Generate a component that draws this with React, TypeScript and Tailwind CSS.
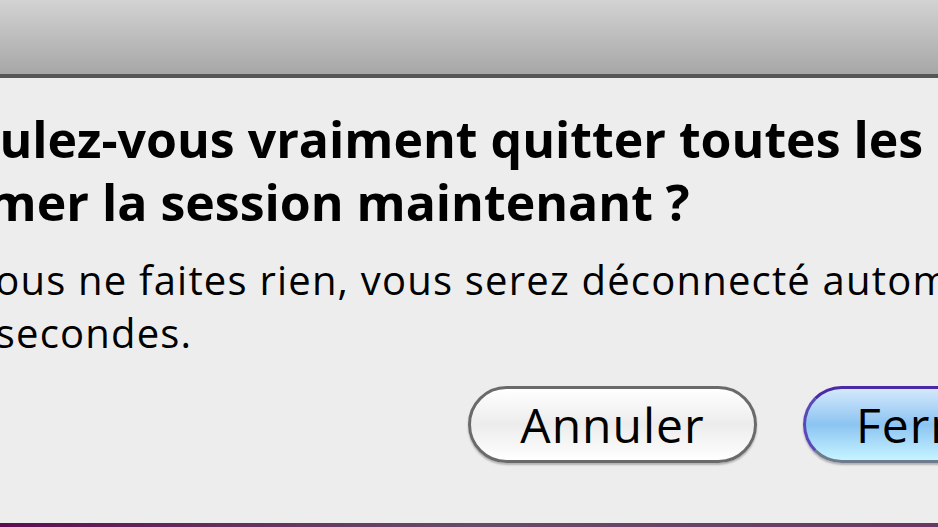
import React from "react";

export default function App() {
  return (
    <div
      className="w-[938px] h-[527px] overflow-hidden flex flex-col bg-[#ededed] text-black"
      style={{ fontFamily: '"Open Sans", "DejaVu Sans", sans-serif' }}
    >
      <div className="h-[78px] shrink-0 bg-gradient-to-b from-[#d3d3d3] to-[#a7a7a7] border-b-4 border-[#565656]" />
      <div className="flex-1 flex flex-col overflow-hidden">
        <div className="mt-[30px] flex flex-col whitespace-nowrap font-bold text-[50px] leading-[63px]">
          <div className="-ml-[64px]">Voulez-vous vraiment quitter toutes les applications et</div>
          <div className="-ml-[84px]">fermer la session maintenant ?</div>
        </div>
        <div className="mt-[19px] flex flex-col whitespace-nowrap text-[40px] leading-[53px] tracking-[1.2px]">
          <div className="-ml-[72px]">Si vous ne faites rien, vous serez déconnecté automatiquement dans</div>
          <div className="-ml-[64px]">60 secondes.</div>
        </div>
        <div className="mt-[27px] ml-[468px] flex gap-[46px] whitespace-nowrap">
          <button className="h-[77px] w-[289px] shrink-0 rounded-full border-[3px] border-[#6a6a6a] bg-gradient-to-b from-white via-[#ececec] to-white text-[48px] leading-none tracking-[1px] shadow-[0_2px_2px_rgba(0,0,0,0.25)]">
            Annuler
          </button>
          <button className="h-[77px] shrink-0 px-[50px] rounded-full border-[3px] border-[#6f7a8c] border-t-[#4a2aa6] border-l-[#5a48b8] bg-gradient-to-b from-[#d4e8fb] via-[#8cc4f2] to-[#c6f4ff] text-[48px] leading-none tracking-[1px] shadow-[0_2px_2px_rgba(0,0,0,0.25)]">
            Fermer
          </button>
        </div>
      </div>
      <div className="h-[4px] shrink-0 bg-gradient-to-r from-[#5d0a50] via-[#6a4a68] to-[#6a3762]" />
    </div>
  );
}
